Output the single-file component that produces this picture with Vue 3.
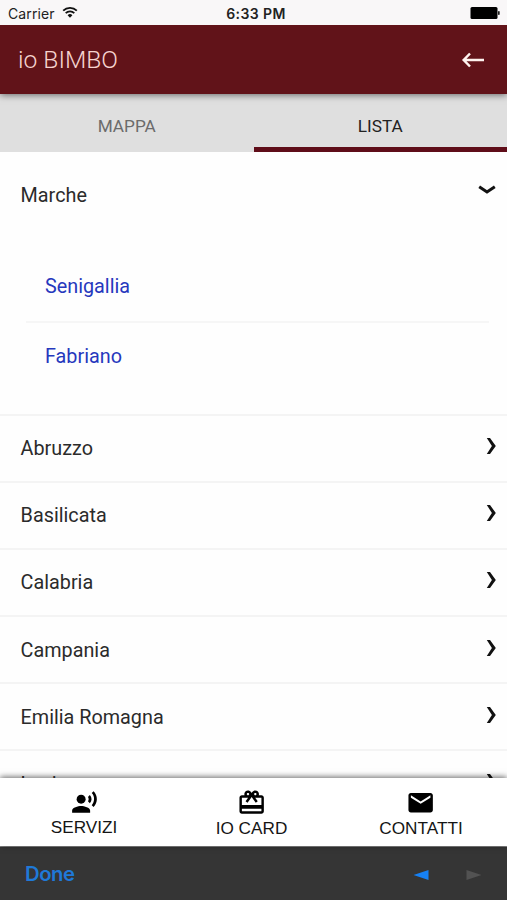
<script setup>
const regions = ['Abruzzo', 'Basilicata', 'Calabria', 'Campania', 'Emilia Romagna', 'Lazio']
const cities = ['Senigallia', 'Fabriano']
</script>

<template>
  <div class="screen">
    <div class="status">
      <div class="carrier">
        <span>Carrier</span>
        <svg class="wifi" viewBox="0 0 16 12" width="16" height="12">
          <path d="M1.2 4.6a9.6 9.6 0 0 1 13.6 0" fill="none" stroke="#111" stroke-width="1.8" />
          <path d="M3.7 7.2a6.1 6.1 0 0 1 8.6 0" fill="none" stroke="#111" stroke-width="1.8" />
          <path d="M8 11.8 5.6 9.2a3.4 3.4 0 0 1 4.8 0z" fill="#111" />
        </svg>
      </div>
      <div class="clock">6:33 PM</div>
      <svg class="battery" viewBox="0 0 30 12" width="30" height="12">
        <rect x="0.500" y="0" width="27" height="12" rx="1.5" fill="#000" />
        <rect x="28" y="4" width="1.7" height="4" rx="0.8" fill="#222" />
      </svg>
    </div>

    <header class="bar">
      <h1>io BIMBO</h1>
      <svg class="back" viewBox="0 0 24 16" width="24" height="16">
        <path d="M23 8H3M9 1.500 2.700 8 9 14.500" fill="none" stroke="#fff3ef" stroke-width="2.500" />
      </svg>
    </header>

    <nav class="tabs">
      <div class="tab">MAPPA</div>
      <div class="tab active">LISTA</div>
    </nav>

    <main class="list">
      <section class="open">
        <div class="row head">
          <span>Marche</span>
          <svg class="down" viewBox="0 0 18 10" width="18" height="10">
            <path d="M1.200 1.800 9 7l7.800-5.200" fill="none" stroke="#111" stroke-width="3" />
          </svg>
        </div>
        <div class="cities">
          <a v-for="city in cities" :key="city" class="city">{{ city }}</a>
        </div>
      </section>
      <div v-for="region in regions" :key="region" class="row">
        <span>{{ region }}</span>
        <svg class="right" viewBox="0 0 10 18" width="10" height="18">
          <path d="M.8 1h3.200L9.800 9l-5.800 8H.8L5.900 9z" fill="#111" />
        </svg>
      </div>
    </main>

    <footer class="actions">
      <div class="action first">
        <svg viewBox="0 0 24 24" width="27" height="27">
          <circle cx="9" cy="9" r="4" />
          <path d="M9 15c-2.670 0-8 1.340-8 4v2h16v-2c0-2.660-5.330-4-8-4zm7.760-9.640l-1.680 1.690c.84 1.180.84 2.710 0 3.890l1.680 1.690c2.020-2.020 2.020-5.070 0-7.270zM20.070 2l-1.630 1.630c2.770 3.020 2.770 7.560 0 10.740L20.070 16c3.900-3.890 3.910-9.950 0-14z" />
        </svg>
        <span>SERVIZI</span>
      </div>
      <div class="action">
        <svg viewBox="0 0 24 24" width="29.300" height="29.300">
          <path d="M20 6h-2.180c.11-.31.18-.65.18-1 0-1.660-1.340-3-3-3-1.050 0-1.960.54-2.500 1.350l-.5.670-.5-.68C10.960 2.540 10.050 2 9 2 7.340 2 6 3.340 6 5c0 .35.070.69.180 1H4c-1.110 0-1.990.89-1.990 2L2 19c0 1.110.89 2 2 2h16c1.110 0 2-.89 2-2V8c0-1.110-.89-2-2-2zm-5-2c.55 0 1 .45 1 1s-.45 1-1 1-1-.45-1-1 .45-1 1-1zM9 4c.55 0 1 .45 1 1s-.45 1-1 1-1-.45-1-1 .45-1 1-1zm11 15H4v-2h16v2zm0-5H4V8h5.080L7 10.830 8.620 12 11 8.760l1-1.360 1 1.360L15.380 12 17 10.830 14.920 8H20v6z" />
        </svg>
        <span>IO CARD</span>
      </div>
      <div class="action">
        <svg viewBox="0 0 24 24" width="29.300" height="29.300">
          <path d="M20 4H4c-1.100 0-1.990.9-1.990 2L2 18c0 1.100.9 2 2 2h16c1.100 0 2-.9 2-2V6c0-1.100-.9-2-2-2zm0 4l-8 5-8-5V6l8 5 8-5v2z" />
        </svg>
        <span>CONTATTI</span>
      </div>
    </footer>

    <div class="browser">
      <span class="done">Done</span>
      <div class="arrows">
        <svg viewBox="0 0 16 10" width="16" height="10"><path d="M.5 5 15.500 0v10z" fill="#1681f5" /></svg>
        <svg viewBox="0 0 16 10" width="16" height="10"><path d="M15.500 5 .5 0v10z" fill="#525252" /></svg>
      </div>
    </div>
  </div>
</template>

<style>
body {
  margin: 0;
}
</style>

<style scoped>
.screen {
  width: 507px;
  height: 900px;
  display: flex;
  flex-direction: column;
  overflow: hidden;
  background: #fefefe;
  font-family: Roboto, "Liberation Sans", sans-serif;
  color: #2b2b2b;
}
.status {
  flex: 0 0 25px;
  display: grid;
  grid-template-columns: 1fr auto 1fr;
  align-items: center;
  padding: 1px 7px 0 8px;
  box-sizing: border-box;
  background: #f9f7f8;
  font-family: Inter, sans-serif;
  font-size: 14px;
  color: #222;
  z-index: 3;
}
.carrier {
  display: flex;
  align-items: center;
  gap: 7px;
  letter-spacing: 0.1px;
}
.wifi {
  margin-top: -2px;
}
.clock {
  font-weight: 600;
  letter-spacing: 0.4px;
  padding-left: 4px;
}
.battery {
  justify-self: end;
}
.bar {
  flex: 0 0 69px;
  box-sizing: border-box;
  padding: 0 22px 0 18px;
  display: flex;
  align-items: center;
  justify-content: space-between;
  background: #611319;
  z-index: 2;
  box-shadow: 0 1px 7px rgba(0, 0, 0, 0.55);
}
h1 {
  margin: 0;
  font-size: 24.600px;
  line-height: 30px;
  font-weight: 300;
  color: #f6d3cf;
}
.tabs {
  flex: 0 0 58px;
  display: flex;
  background: #dfdfdf;
}
.tab {
  flex: 1;
  box-sizing: border-box;
  padding-top: 21px;
  line-height: 22px;
  font-size: 17.200px;
  text-align: center;
  color: #6b6b6b;
}
.active {
  color: #222;
  border-bottom: 5px solid #5f0d19;
}
.list {
  flex: 0 0 626px;
  overflow: hidden;
}
.open {
  height: 261.500px;
  box-sizing: border-box;
}
.row {
  height: 67.200px;
  box-sizing: border-box;
  border-top: 2px solid #f4f4f4;
  padding: 2px 11px 0 20.600px;
  display: flex;
  align-items: center;
  justify-content: space-between;
  font-size: 19.800px;
  line-height: 26px;
}
.right {
  margin-top: -6px;
}
.head {
  height: 87px;
  padding-top: 0;
  border-top: 0;
}
.down {
  margin-top: -11px;
}
.cities {
  margin: 12px 18px 0 26px;
}
.city {
  display: block;
  height: 70px;
  box-sizing: border-box;
  padding: 21px 0 0 19px;
  font-size: 19.800px;
  line-height: 26px;
  color: #2638bd;
}
.city:first-child {
  height: 72px;
  padding-top: 23px;
  border-bottom: 2px solid #f6f6f6;
}
.actions {
  flex: 0 0 68px;
  z-index: 2;
  box-sizing: border-box;
  display: grid;
  grid-template-columns: 168px 167px 172px;
  background: #fff;
  box-shadow: 0 -1px 6px rgba(0, 0, 0, 0.6);
}
.action {
  padding-top: 10px;
  display: flex;
  flex-direction: column;
  align-items: center;
  gap: 1px;
  font-family: "Liberation Sans", sans-serif;
  font-size: 17.200px;
  line-height: 20px;
  color: #151515;
}
.first {
  padding-top: 11px;
}
.action svg {
  fill: #000;
}
.browser {
  flex: 1;
  display: flex;
  justify-content: space-between;
  align-items: center;
  padding: 0 25px;
  background: #353535;
  border-top: 1px solid #888;
}
.done {
  font-family: Inter, sans-serif;
  font-size: 20.300px;
  font-weight: 600;
  letter-spacing: -0.500px;
  color: #1f79d8;
}
.arrows {
  display: flex;
  gap: 37px;
  padding-top: 2px;
}
</style>
